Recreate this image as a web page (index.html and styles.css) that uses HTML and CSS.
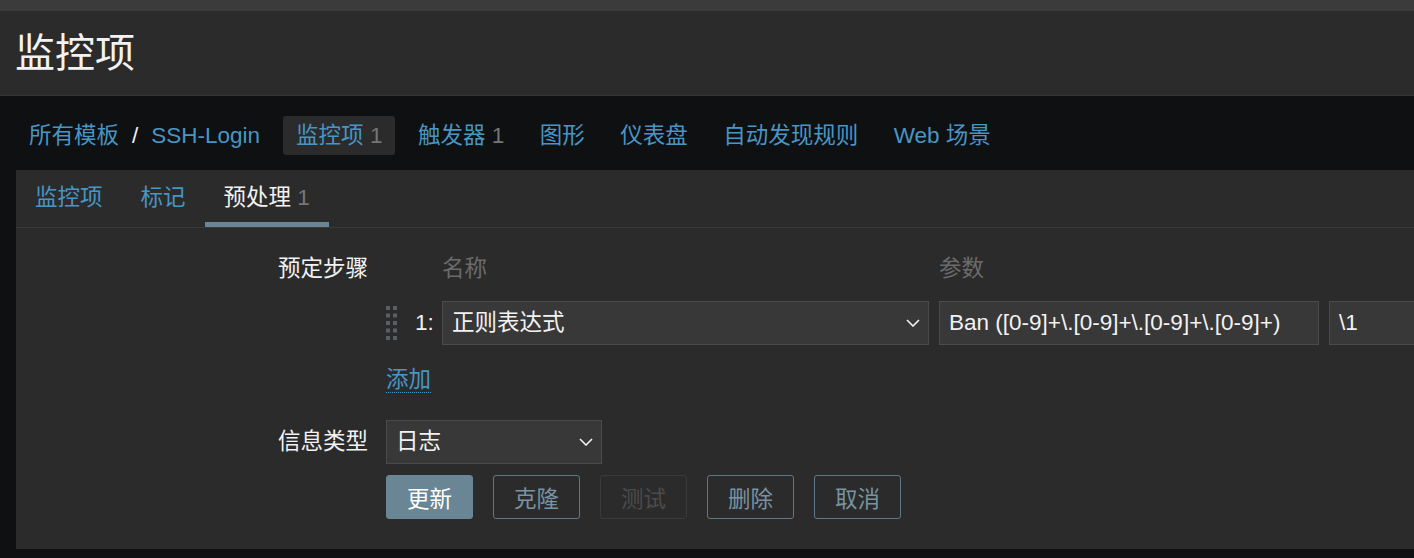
FILE: index.html
```html
<!DOCTYPE html>
<html lang="zh-CN">
<head>
<meta charset="utf-8">
<title>监控项</title>
<link rel="stylesheet" href="styles.css">
</head>
<body>
<div class="topbar"></div>
<header class="page-header"><h1>监控项</h1></header>
<nav class="navbar">
  <div class="breadcrumbs"><a href="#">所有模板</a><span class="sep">/</span><a href="#">SSH-Login</a></div>
  <ul class="nav-tabs">
    <li class="active"><a href="#">监控项</a> <span class="count">1</span></li>
    <li><a href="#">触发器</a> <span class="count">1</span></li>
    <li><a href="#">图形</a></li>
    <li><a href="#">仪表盘</a></li>
    <li><a href="#">自动发现规则</a></li>
    <li><a href="#">Web 场景</a></li>
  </ul>
</nav>
<main class="panel">
  <div class="tabs">
    <a class="tab" href="#">监控项</a>
    <a class="tab" href="#">标记</a>
    <span class="tab tab-active">预处理 <span class="count">1</span></span>
  </div>
  <form class="form">
    <div class="form-label label-steps">预定步骤</div>
    <div class="steps">
      <div class="steps-grid">
        <span></span>
        <span></span>
        <span class="col-head">名称</span>
        <span class="col-head col-span">参数</span>
        <span class="drag">
          <svg width="12" height="35" viewBox="0 0 12 35" aria-hidden="true">
            <g fill="#5a5f64">
              <rect x="0" y="0" width="4" height="4"/><rect x="7" y="0" width="4" height="4"/>
              <rect x="0" y="7.5" width="4" height="4"/><rect x="7" y="7.5" width="4" height="4"/>
              <rect x="0" y="15" width="4" height="4"/><rect x="7" y="15" width="4" height="4"/>
              <rect x="0" y="22.5" width="4" height="4"/><rect x="7" y="22.5" width="4" height="4"/>
              <rect x="0" y="30" width="4" height="4"/><rect x="7" y="30" width="4" height="4"/>
            </g>
          </svg>
        </span>
        <span class="num">1:</span>
        <div class="field select"><span>正则表达式</span>
          <svg class="chevron" width="14" height="8" viewBox="0 0 14 8" aria-hidden="true"><polyline points="1,1 7,7 13,1" fill="none" stroke="#f2f2f2" stroke-width="1.6"/></svg>
        </div>
        <div class="field">Ban ([0-9]+\.[0-9]+\.[0-9]+\.[0-9]+)</div>
        <div class="field">\1</div>
      </div>
      <a class="add-link" href="#">添加</a>
    </div>
    <div class="form-label label-type">信息类型</div>
    <div class="type-cell">
      <div class="field select select-sm"><span>日志</span>
        <svg class="chevron" width="14" height="8" viewBox="0 0 14 8" aria-hidden="true"><polyline points="1,1 7,7 13,1" fill="none" stroke="#f2f2f2" stroke-width="1.6"/></svg>
      </div>
    </div>
    <div></div>
    <div class="buttons">
      <button type="button" class="btn btn-primary">更新</button>
      <button type="button" class="btn">克隆</button>
      <button type="button" class="btn btn-disabled">测试</button>
      <button type="button" class="btn">删除</button>
      <button type="button" class="btn">取消</button>
    </div>
  </form>
</main>
</body>
</html>
```
FILE: styles.css
```css
html, body {
  margin: 0;
  height: 100%;
  overflow: hidden;
}
body {
  background: #0f1012;
  font-family: "Liberation Sans", "Noto Sans CJK SC", sans-serif;
  font-size: 22.5px;
  color: #f2f2f2;
}
a {
  color: #4796c4;
  text-decoration: none;
}
.topbar {
  height: 11px;
  background: #3b3b3b;
}
.page-header {
  height: 84px;
  background: #2b2b2b;
  border-bottom: 1px solid #343434;
  display: flex;
  align-items: center;
  padding-left: 15px;
}
.page-header h1 {
  margin: 0;
  font-size: 40px;
  font-weight: normal;
  line-height: 1;
  color: #f2f2f2;
}
.navbar {
  height: 74px;
  box-sizing: border-box;
  padding: 20px 0 15px 16px;
  display: flex;
  align-items: stretch;
  background: #0f1012;
}
.breadcrumbs {
  padding: 0 13px;
  line-height: 39px;
  white-space: nowrap;
}
.sep {
  color: #f2f2f2;
  margin: 0 13px;
}
.nav-tabs {
  display: flex;
  gap: 9.5px;
  margin: 0 0 0 10px;
  padding: 0;
  list-style: none;
}
.nav-tabs li {
  padding: 0 13px;
  line-height: 39px;
  border-radius: 3px;
  white-space: nowrap;
}
.nav-tabs li.active {
  background: #2b2b2b;
}
.count {
  color: #767676;
}
.panel {
  margin-left: 16px;
  background: #2b2b2b;
  padding-bottom: 30px;
  overflow: hidden;
}
.tabs {
  display: flex;
  height: 57px;
  border-bottom: 1px solid #393939;
}
.tab {
  box-sizing: border-box;
  height: 57px;
  padding: 0 19px;
  line-height: 55px;
  border-bottom: 5px solid transparent;
  white-space: nowrap;
}
.tab-active {
  color: #f2f2f2;
  border-bottom-color: #6b8595;
}
.form {
  display: grid;
  grid-template-columns: 352px 1fr;
  column-gap: 18px;
  row-gap: 11px;
  padding-top: 20px;
}
.form-label {
  text-align: right;
  color: #f2f2f2;
  white-space: nowrap;
}
.label-steps {
  line-height: 42px;
}
.label-type {
  line-height: 44px;
}
.steps {
  margin-bottom: 16px;
}
.steps-grid {
  display: grid;
  grid-template-columns: 19px 17px 487px 380px 260px;
  grid-template-rows: 42px 44px;
  column-gap: 10px;
  row-gap: 11px;
}
.col-head {
  color: #6b6b6b;
  line-height: 42px;
}
.col-span {
  grid-column: span 2;
}
.drag {
  display: flex;
  align-items: center;
}
.num {
  line-height: 44px;
  white-space: nowrap;
}
.field {
  box-sizing: border-box;
  height: 44px;
  background: #383838;
  border: 1px solid #4b4b4b;
  padding: 0 8px 0 9px;
  line-height: 42px;
  color: #f2f2f2;
  white-space: nowrap;
  overflow: hidden;
}
.select {
  display: flex;
  justify-content: space-between;
  align-items: center;
}
.select-sm {
  width: 216px;
}
.add-link {
  display: inline-block;
  margin-top: 23px;
  line-height: 24px;
  border-bottom: 1px dotted #4796c4;
}
.buttons {
  display: flex;
  gap: 20px;
}
.btn {
  box-sizing: border-box;
  width: 87px;
  height: 44px;
  padding: 0;
  border: 1px solid #5d7987;
  border-radius: 3px;
  background: transparent;
  color: #7893a1;
  font-family: "Liberation Sans", "Noto Sans CJK SC", sans-serif;
  font-size: 22.5px;
}
.btn-primary {
  background: #6a8593;
  border-color: #6a8593;
  color: #ffffff;
}
.btn-disabled {
  border-color: #3a3a3a;
  color: #4b4b4b;
}
```
